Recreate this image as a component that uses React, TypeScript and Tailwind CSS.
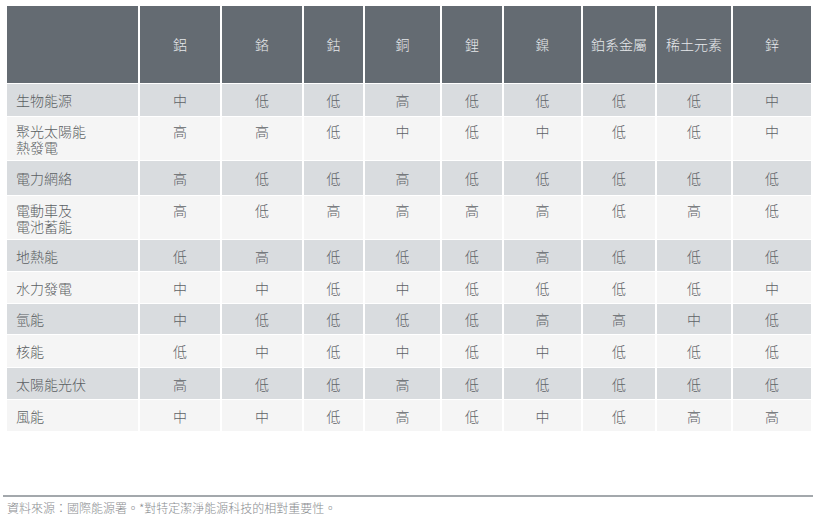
import { Fragment } from 'react';

const metals = ['鋁', '鉻', '鈷', '銅', '鋰', '鎳', '鉑系金屬', '稀土元素', '鋅'];

const rows: { name: string[]; values: string[]; h: string }[] = [
  { name: ['生物能源'], values: ['中', '低', '低', '高', '低', '低', '低', '低', '中'], h: 'h-[32px]' },
  { name: ['聚光太陽能', '熱發電'], values: ['高', '高', '低', '中', '低', '中', '低', '低', '中'], h: 'h-[43px]' },
  { name: ['電力網絡'], values: ['高', '低', '低', '高', '低', '低', '低', '低', '低'], h: 'h-[34px]' },
  { name: ['電動車及', '電池蓄能'], values: ['高', '低', '高', '高', '高', '高', '低', '高', '低'], h: 'h-[43px]' },
  { name: ['地熱能'], values: ['低', '高', '低', '低', '低', '高', '低', '低', '低'], h: 'h-[31px]' },
  { name: ['水力發電'], values: ['中', '中', '低', '中', '低', '低', '低', '低', '中'], h: 'h-[31px]' },
  { name: ['氫能'], values: ['中', '低', '低', '低', '低', '高', '高', '中', '低'], h: 'h-[30px]' },
  { name: ['核能'], values: ['低', '中', '低', '中', '低', '中', '低', '低', '低'], h: 'h-[32px]' },
  { name: ['太陽能光伏'], values: ['高', '低', '低', '高', '低', '低', '低', '低', '低'], h: 'h-[31px]' },
  { name: ['風能'], values: ['中', '中', '低', '高', '低', '中', '低', '高', '高'], h: 'h-[31px]' },
];

const cols = 'grid grid-cols-[131px_80px_80px_59px_75px_60px_77px_72px_74px_78px] gap-x-[2px]';

export default function App() {
  return (
    <div
      className="w-[820px] h-[520px] bg-white pt-[6px] pl-[7px] overflow-hidden"
      style={{ fontFamily: '"Noto Sans CJK TC", "Noto Sans", sans-serif' }}
    >
      <div className="flex flex-col gap-y-[1px] w-[804px]">
        <div className={`${cols} h-[77px]`}>
          <div className="bg-[#646b72]" />
          {metals.map((m) => (
            <div key={m} className="bg-[#646b72] flex items-center justify-center text-[14px] text-[#e6e8ea] font-light">
              {m}
            </div>
          ))}
        </div>

        {rows.map((r, i) => {
          const bg = i % 2 === 0 ? 'bg-[#d9dcdf]' : 'bg-[#f5f5f5]';
          const tall = r.name.length > 1;
          return (
            <div key={r.name.join('')} className={`${cols} ${r.h}`}>
              <div className={`${bg} flex items-center pl-[9px]`}>
                <p className="text-[14px] leading-[16px] text-[#5b5f63] font-light">
                  {r.name.map((n, k) => (
                    <Fragment key={n}>
                      {k > 0 && <br />}
                      {n}
                    </Fragment>
                  ))}
                </p>
              </div>
              {r.values.map((v, j) => (
                <div
                  key={j}
                  className={`${bg} flex justify-center text-[14px] leading-[16px] text-[#5f6367] font-light ${
                    tall ? 'items-start pt-[6px]' : 'items-center'
                  }`}
                >
                  {v}
                </div>
              ))}
            </div>
          );
        })}
      </div>

      <div className="mt-[64px] -ml-[4px] w-[810px] border-t-[2px] border-[#a3a8ac]" />
      <div className="mt-[3px] text-[12px] leading-[16px] text-[#8a8d90] font-light">
        資料來源：國際能源署。*對特定潔淨能源科技的相對重要性。
      </div>
    </div>
  );
}
